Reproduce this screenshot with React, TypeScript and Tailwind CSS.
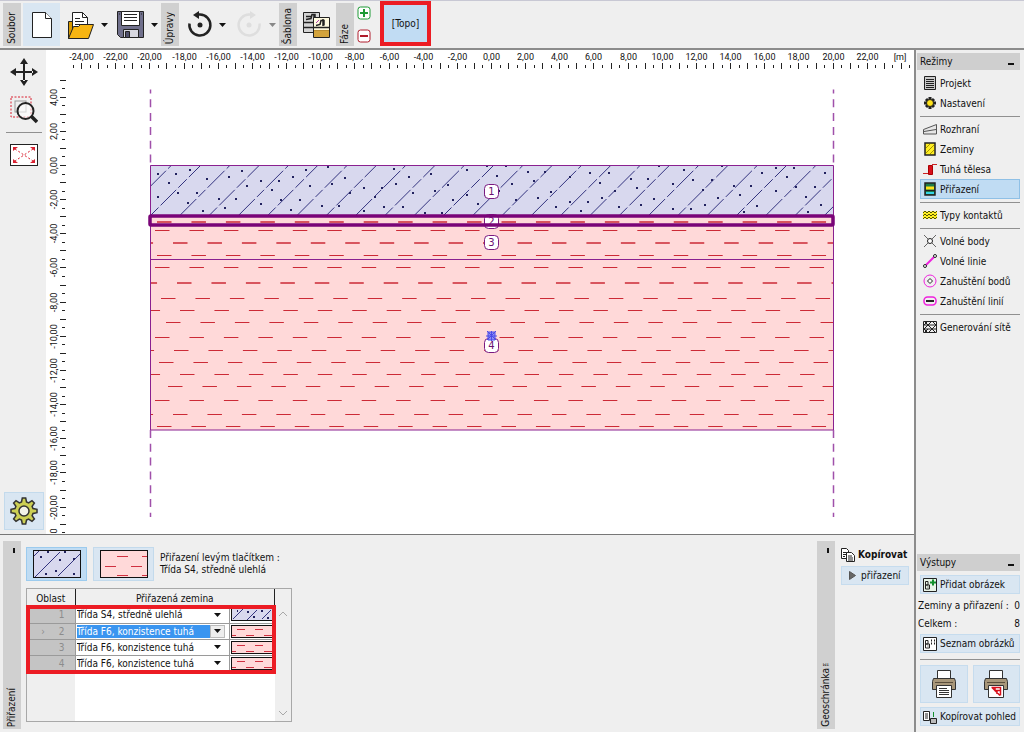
import type { ReactNode } from "react";

const SCALE = 17.08;
const ORIGIN_X = 445.5;
const ORIGIN_Y = 115.5;

const px = (m: number) => Math.round(ORIGIN_X + m * SCALE - 0.5) + 0.5;
const py = (m: number) => Math.round(ORIGIN_Y - m * SCALE - 0.5) + 0.5;

const range = (from: number, to: number, step: number) => {
  const out: number[] = [];
  for (let v = from; v <= to + 0.001; v += step) out.push(v);
  return out;
};

const formatMeters = (v: number) => v.toFixed(2).replace(".", ",");

// [y, x of the first full dash]
const clayRows = [
  [172, 111],
  [180.5, 109],
  [193, 127],
  [205.5, 111],
  [217.5, 109],
  [233, 131],
  [248.5, 115],
  [260.5, 134],
  [272.5, 120],
  [287.5, 109],
  [300.5, 128],
  [312.5, 113],
  [324.5, 134],
  [336.5, 122],
  [350.5, 109],
  [364.5, 127],
  [376.5, 111],
];

const sandDots = [
  [7, 8], [25, 8], [39, 4], [56, 13], [7, 31], [27, 27], [46, 27], [37, 37],
  [52, 45], [18, 17], [78, 11], [91, 5], [68, 33], [85, 33], [74, 42], [96, 20],
];

const regions = [
  { id: 1, y: 141 },
  { id: 2, y: 171 },
  { id: 3, y: 192 },
  { id: 4, y: 295 },
];

function Rulers() {
  return (
    <g>
      <g stroke="#222">
        {range(-24.5, 24.5, 0.5).map((m) => (
          <line key={m} x1={px(m)} x2={px(m)} y1={Number.isInteger(m) ? 13 : 15} y2={Number.isInteger(m) ? 19 : 18} />
        ))}
        {range(-21.5, 5, 0.5).map((m) => (
          <line key={m} y1={py(m)} y2={py(m)} x1={Number.isInteger(m) ? 14 : 16} x2={Number.isInteger(m) ? 20 : 19} />
        ))}
      </g>
      <g fontFamily="Roboto, sans-serif" fontSize="9" fill="#111" textAnchor="middle">
        {range(-24, 22, 2).map((m) => (
          <text key={m} x={px(m)} y="10">
            {formatMeters(m)}
          </text>
        ))}
        <text x="854" y="10">
          [m]
        </text>
        {range(-20, 4, 2).map((m) => (
          <text key={m} transform={`translate(11 ${py(m)}) rotate(-90)`}>
            {formatMeters(m)}
          </text>
        ))}
        {/* only the last digit of the next label fits above the edge */}
        <text transform="translate(11 481) rotate(-90)">0</text>
      </g>
    </g>
  );
}

function Section() {
  return (
    <g>
      <defs>
        <clipPath id="sand">
          <rect x="104" y="115" width="683" height="50" />
        </clipPath>
        <clipPath id="clay">
          <rect x="104" y="165" width="683" height="215" />
        </clipPath>
      </defs>
      <rect x="104" y="115" width="683" height="50" fill="#d8d8ee" />
      <rect x="104" y="165" width="683" height="215" fill="#ffd9d9" />
      <g clipPath="url(#sand)">
        {range(-2, 24, 1).map((i) => (
          <line
            key={i}
            x1={104 + i * 29.3}
            y1="166"
            x2={155 + i * 29.3}
            y2="115"
            stroke="#33337f"
            strokeDasharray={i % 2 ? "24 3 10 3" : "12 3 22 3"}
          />
        ))}
        {range(0, 6, 1).map((i) =>
          sandDots.map(([x, y]) => (
            <rect key={`${i}-${x}-${y}`} x={104 + i * 103 + x} y={115 + ((y + i * 7) % 48)} width="2" height="2" fill="#22225f" />
          ))
        )}
      </g>
      <g clipPath="url(#clay)" stroke="#cc2a36">
        {clayRows.map(([y, x]) => (
          <line
            key={y}
            x1={x - 34.45}
            x2="800"
            y1={y}
            y2={y}
            strokeDasharray="14.5 19.95"
            strokeWidth={Number.isInteger(y) ? 1.5 : 1}
          />
        ))}
      </g>
      <g fill="none" stroke="#8a2090">
        <path d="M104.5 115.5H787.5V380H104.5Z" />
        <path d="M104 209.5H787" />
      </g>
      <g stroke="#a050aa" strokeWidth="1.5" strokeDasharray="8 5.8">
        <path d="M104.5 39.5V115" strokeDashoffset="4" />
        <path d="M787.5 39.5V115" strokeDashoffset="4" />
        <path d="M104.5 380V467" />
        <path d="M787.5 380V467" />
      </g>
      {regions.map(({ id, y }) => (
        <g key={id}>
          <rect x="438.5" y={y - 6.5} width="14" height="14" rx="4" fill="#fff" stroke="#7a1a80" />
          <text x="445.5" y={y + 4} textAnchor="middle" fontSize="10" fontFamily="'DejaVu Sans', sans-serif" fill="#6a1070">
            {id}
          </text>
        </g>
      ))}
      <path d="M442 282h7v8h-7zM441 281l9 9M450 281l-9 9M445.5 281v10M440 286h11" fill="#8d8df5" stroke="#4a4ae6" />
      <rect x="104" y="166" width="683" height="9" fill="none" stroke="#7a0478" strokeWidth="3.5" rx="1" />
    </g>
  );
}

function VerticalTab({ label, className = "" }: { label: string; className?: string }) {
  return (
    <div className={`flex h-full w-[18px] shrink-0 items-end bg-[#d0d0d0] pb-[2px] ${className}`}>
      <span className="rotate-180 leading-[18px] whitespace-nowrap [writing-mode:vertical-rl]">{label}</span>
    </div>
  );
}

function Caret({ color = "#111" }: { color?: string }) {
  return (
    <svg width="7" height="4" viewBox="0 0 7 4" className="shrink-0">
      <path d="M0 0h7L3.5 4z" fill={color} />
    </svg>
  );
}

function Toolbar() {
  return (
    <header className="flex h-12 items-start border-t border-[#c8c8d4] pt-[2px] pl-[3px]">
      <div className="flex h-[43px] items-center">
        <VerticalTab label="Soubor" />
        <button aria-label="Nový" className="ml-[2px] flex h-full w-[37px] items-center justify-center bg-[#d9e6f2]">
          <svg width="22" height="28" viewBox="0 0 22 28" fill="#fff" stroke="#222">
            <path d="M1.5 1.5h13l6 6v19h-19z" />
            <path d="M14.5 1.5v6h6" />
          </svg>
        </button>
        <button aria-label="Otevřít" className="ml-[7px]">
          <svg width="28" height="30" viewBox="0 0 28 30" stroke="#222">
            <path d="M1.5 28.5v-17h6l2 3h10v14z" fill="#d99a00" />
            <path d="M5.5 21.5v-19h10l5 5v14z" fill="#fff" />
            <path d="M15.5 2.5v5h5M8 8.5h5M8 11.5h9M8 14.5h9" fill="none" />
            <path d="M1.5 28.5l5-12h5l2-2h13l-5 14z" fill="#f7b512" />
          </svg>
        </button>
        <button aria-label="Otevřít nedávné" className="ml-[6px]">
          <Caret />
        </button>
        <button aria-label="Uložit" className="ml-[8px]">
          <svg width="29" height="29" viewBox="0 0 29 29" stroke="#222">
            <path d="M1.5 1.5h26v26h-23l-3-3z" fill="#70708c" />
            <path d="M5.5 1.5h18v14h-18z" fill="#fff" />
            <path d="M8 4.5h13M8 7.5h13M8 10.5h13" />
            <path d="M7.5 19.5h15v8h-15z" fill="#d8d8e0" />
            <path d="M9.5 21.5h4v6h-4z" fill="#50506c" />
            <path d="M3 4h1M25 4h1" />
          </svg>
        </button>
        <button aria-label="Uložit jako" className="ml-[6px]">
          <Caret />
        </button>
        <VerticalTab label="Úpravy" className="ml-[3px]" />
        <button aria-label="Zpět" className="ml-[8px]">
          <svg width="26" height="28" viewBox="0 0 26 28">
            <path d="M2.5 12.5a10.5 10.5 0 1 0 10.5-9H11" fill="none" stroke="#222" strokeWidth="2.5" />
            <path d="M6 4l6-4v8z" fill="#222" />
            <circle cx="13" cy="14" r="2.5" fill="#222" />
          </svg>
        </button>
        <button aria-label="Historie zpět" className="ml-[6px]">
          <Caret />
        </button>
        <button aria-label="Znovu" disabled className="ml-[11px]">
          <svg width="26" height="28" viewBox="0 0 26 28">
            <path d="M22.5 12.5a10.5 10.5 0 1 1-10.5-9h2" fill="none" stroke="#dedede" strokeWidth="2.5" />
            <path d="M19 4l-6-4v8z" fill="#dedede" />
            <circle cx="12" cy="14" r="2.5" fill="#dedede" />
          </svg>
        </button>
        <button aria-label="Historie znovu" disabled className="ml-[6px]">
          <Caret color="#888" />
        </button>
        <VerticalTab label="Šablona" className="ml-[3px]" />
        <button aria-label="Šablona" className="ml-[6px]">
          <svg width="28" height="28" viewBox="0 0 28 28" stroke="#222">
            <path d="M.5 1.5h16v20H.5z" fill="#d4d4d4" />
            <path d="M3 5.5h5M3 8.5l5-1 1-4h3v5M11 3v6M1 11.5h15M1 16.5h15" fill="none" strokeWidth="1.5" />
            <path d="M10.5 6.5h16v20h-16z" fill="#fffbe0" />
            <path d="M11 20h15v6H11z" fill="#d3a33c" stroke="none" />
            <path d="M13 14.5l4-1 1-4h3v5M20 8v7M11 16.5h15" fill="none" strokeWidth="1.5" />
            <path d="M11 19.5h15" stroke="#b98c30" />
            <path d="M13 12l3-3" stroke="#b03ab0" />
          </svg>
        </button>
        <VerticalTab label="Fáze" className="ml-[5px]" />
        <div className="ml-[3px] flex flex-col gap-[9px]">
          <button aria-label="Přidat fázi">
            <svg width="14" height="14" viewBox="0 0 14 14" className="block" fill="none" stroke="#1c9a34">
              <rect x="1" y="1" width="12" height="12" rx="2.5" fill="#fff" />
              <path d="M3 7h8M7 3v8" strokeWidth="2" />
            </svg>
          </button>
          <button aria-label="Odebrat fázi">
            <svg width="14" height="14" viewBox="0 0 14 14" className="block" fill="none" stroke="#b01c2c">
              <rect x="1" y="1" width="12" height="12" rx="2.5" fill="#fff" />
              <path d="M3 7h8" strokeWidth="2" />
            </svg>
          </button>
        </div>
      </div>
      <button className="-mt-[2px] ml-[9px] h-[45px] w-[51px] border-4 border-[#ec1c24] bg-[#c1dcf3]">[Topo]</button>
    </header>
  );
}

function Gear({ size, fill, stroke }: { size: number; fill: string; stroke: string }) {
  return (
    <svg width={size} height={size} viewBox="0 0 28 28" fill={fill} stroke={stroke} strokeWidth="1.5">
      {/* eight teeth around the hub */}
      <path d="M11.500 5l.8-4h3.400l.8 4 2.100.9L22 3.600 24.400 6l-2.300 3.400.9 2.100 4 .8v3.400l-4 .8-.9 2.100 2.300 3.400L22 24.400l-3.400-2.300-2.100.9-.8 4h-3.400l-.8-4-2.100-.9L6 24.400 3.600 22l2.300-3.400L5 16.500l-4-.8v-3.400l4-.8.9-2.100L3.600 6 6 3.600l3.400 2.300z" />
      <circle cx="14" cy="14" r="5" fill="#f2f2e8" />
    </svg>
  );
}

function ViewTools() {
  return (
    <div className="flex w-[46px] shrink-0 flex-col items-center pt-[8px] pb-1 pl-px">
      <button aria-label="Posun">
        <svg width="28" height="28" viewBox="0 0 28 28" fill="#222" className="block">
          <path d="M13 5h2v18h-2zM5 13h18v2H5zM14 0l4 6h-8zM14 28l4-6h-8zM0 14l6-4v8zM28 14l-6-4v8z" />
        </svg>
      </button>
      <button aria-label="Lupa" className="mt-[10px]">
        <svg width="28" height="28" viewBox="0 0 28 28" fill="none" className="block">
          <rect x="1" y="1" width="20" height="20" stroke="#d92030" strokeDasharray="2 1.5" />
          <rect x="5" y="5" width="11" height="11" stroke="#999" />
          <circle cx="15.5" cy="15" r="8" stroke="#222" strokeWidth="2" fill="#fff" fillOpacity=".6" />
          <path d="M21 20l6 6" stroke="#222" strokeWidth="3.5" />
        </svg>
      </button>
      <div className="mt-[8px] h-px w-9 bg-[#909090]" />
      <button aria-label="Zobrazit vše" className="mt-[11px]">
        <svg width="28" height="22" viewBox="0 0 28 22" fill="#fff" stroke="#222" className="block">
          <rect x=".5" y=".5" width="27" height="21" />
          <path d="M5 5l18 12M23 5L5 17" stroke="#d92030" strokeDasharray="2 2" />
          <path d="M3 3h5l-5 4zM25 3h-5l5 4zM3 19h5l-5-4zM25 19h-5l5-4z" fill="#d92030" stroke="none" />
        </svg>
      </button>
      <button aria-label="Nastavení zobrazení" className="mt-auto flex h-[38px] w-10 items-center justify-center border border-[#c3daec] bg-[#d9e6f2]">
        <Gear size={28} fill="#cccf54" stroke="#333" />
      </button>
    </div>
  );
}

function ModeIcon({ children }: { children: ReactNode }) {
  return (
    <svg width="14" height="14" viewBox="0 0 14 14" fill="none" stroke="#222" className="shrink-0">
      {children}
    </svg>
  );
}

const modeGroups: { label: string; active?: boolean; icon: ReactNode }[][] = [
  [
    { label: "Projekt", icon: <path d="M1.5.5h11v13h-11zM3 3.5h8M3 5.5h8M3 7.5h8M3 9.5h8M3 11.5h8" fill="#ccc" /> },
    {
      label: "Nastavení",
      icon: (
        <>
          <path d="M7 1v12M1 7h12M3 3l8 8M11 3L3 11" strokeWidth="3" />
          <circle cx="7" cy="7" r="3.5" fill="#ffe21a" />
        </>
      ),
    },
  ],
  [
    { label: "Rozhraní", icon: <path d="M.5 7.5L13.5 2.5v9.5H.5zM1 9.5L13 7.5" fill="#e6e6e6" stroke="#555" /> },
    {
      label: "Zeminy",
      icon: (
        <>
          <rect x="2" y="1" width="10" height="12" fill="#ffee22" strokeWidth="1.5" />
          <path d="M3 6l4-4M3 11l8-8M7 12l4-4" stroke="#a89500" />
        </>
      ),
    },
    {
      label: "Tuhá tělesa",
      icon: (
        <>
          <path d="M0 11.5h6M9 2.5h5" stroke="#c22" />
          <path d="M5.5 3.5h4v9h-4z" fill="#d8101c" stroke="#a00" />
        </>
      ),
    },
    {
      label: "Přiřazení",
      active: true,
      icon: (
        <>
          <rect x="2" y="1" width="10" height="12" fill="#1c7c4c" strokeWidth="1.5" />
          <path d="M3 6h8" stroke="#ffe21a" strokeWidth="3" />
          <path d="M3 11h8" stroke="#35d6e8" strokeWidth="2" />
          <path d="M2 8.5h10" />
        </>
      ),
    },
  ],
  [
    {
      label: "Typy kontaktů",
      icon: (
        <>
          <path d="M0 7h14" stroke="#ffee22" strokeWidth="7" />
          <path d="M0 5l2-2 2 2 2-2 2 2 2-2 2 2 2-2M0 8l2-2 2 2 2-2 2 2 2-2 2 2 2-2M0 11l2-2 2 2 2-2 2 2 2-2 2 2 2-2" stroke="#555500" />
        </>
      ),
    },
  ],
  [
    {
      label: "Volné body",
      icon: (
        <>
          <path d="M1 1l12 12M13 1L1 13" stroke="#666" />
          <circle cx="7" cy="7" r="2.5" fill="#fff" />
        </>
      ),
    },
    {
      label: "Volné linie",
      icon: (
        <>
          <path d="M2 12L12 2" stroke="#ee22dd" strokeWidth="2" />
          <circle cx="2" cy="12" r="1.5" fill="#fff" />
          <circle cx="12" cy="2" r="1.5" fill="#fff" />
        </>
      ),
    },
    {
      label: "Zahuštění bodů",
      icon: (
        <>
          <circle cx="7" cy="7" r="6" stroke="#ee22dd" />
          <path d="M7 4.5L9.5 7 7 9.5 4.5 7z" fill="#fff" />
        </>
      ),
    },
    {
      label: "Zahuštění linií",
      icon: (
        <>
          <rect x="1" y="3" width="12" height="8" rx="3.5" stroke="#ee22dd" strokeWidth="1.5" />
          <path d="M3 7h8" strokeWidth="2" />
        </>
      ),
    },
  ],
  [
    {
      label: "Generování sítě",
      icon: <path d="M.5 1.5h13v11H.5zM0 5h14M0 9h14M1 1l4 4 4-4 4 4M1 9l4-4 4 4 4-4M1 9l4 4 4-4 4 4M5 1l-4 4M5 9l-4 4" />,
    },
  ],
];

function PanelTitle({ title }: { title: string }) {
  return (
    <div className="flex h-[17px] items-center justify-between bg-[#cfcfcf] px-[3px]">
      <h2>{title}</h2>
      <button aria-label={`Sbalit ${title}`} className="mt-1 mr-[3px] h-[2px] w-[6px] bg-[#111]" />
    </div>
  );
}

function SideButton({ label, children }: { label: string; children: ReactNode }) {
  return (
    <button className="flex h-[19px] w-full items-center gap-[3px] border border-[#c6dcee] bg-[#d9e6f2] pl-[2px] whitespace-nowrap">
      <svg width="14" height="14" viewBox="0 0 14 14" fill="none" stroke="#222" className="shrink-0">
        {children}
      </svg>
      {label}
    </button>
  );
}

function Printer({ red = false }: { red?: boolean }) {
  return (
    <svg width="24" height="28" viewBox="0 0 24 28" stroke="#333">
      <path d="M5.5.5h13v9h-13z" fill="#fff" />
      <path d="M1.5 8.5h21l1 3v8H.5v-8z" fill="#a8977a" />
      <path d="M3 12.5h18" stroke="#5b4e3c" />
      <path d="M4.5 15.5h15v12h-15z" fill="#fff" />
      {red ? (
        <path d="M7.5 17.5h9v8M8 17.5l8 8M11 17.5v3h5M13 20v4" stroke="#d8101c" strokeWidth="1.5" fill="none" />
      ) : (
        <path d="M7 18.5h8M7 20.5h10M7 22.5h10M7 24.5h10" />
      )}
    </svg>
  );
}

function Sidebar() {
  return (
    <aside className="flex w-[110px] shrink-0 flex-col justify-between border-l-2 border-[#8c8c8c] pt-[3px] pr-1 pb-[6px] pl-px">
      <section>
        <PanelTitle title="Režimy" />
        <nav className="flex flex-col pt-[3px] pl-[3px]">
          {modeGroups.map((group, index) => (
            <div key={index} className="border-[#909090] not-first:mt-[3px] not-first:border-t not-first:pt-[2px]">
              {group.map(({ label, active, icon }) => (
                <button
                  key={label}
                  className={`flex h-5 w-full items-center gap-[3px] border pl-[2px] whitespace-nowrap ${
                    active ? "border-[#8fc0e6] bg-[#c0dcf3]" : "border-transparent"
                  }`}
                >
                  <ModeIcon>{icon}</ModeIcon>
                  {label}
                </button>
              ))}
            </div>
          ))}
        </nav>
      </section>
      <section>
        <PanelTitle title="Výstupy" />
        <div className="flex flex-col pt-1 pl-[3px]">
          <SideButton label="Přidat obrázek">
            <path d="M.5.5h13v13H.5z" fill="#e8f4e8" />
            <path d="M2.5 3.5h2.500v3.500h-2.500zM2.500 7h4v4h-4zM4.500 9h1" />
            <path d="M10 1.5v6M7 4.5h6" stroke="#12902c" strokeWidth="2" />
          </SideButton>
          <dl className="-ml-[2px] leading-[18px] whitespace-nowrap">
            <div className="mt-[3px] flex justify-between">
              <dt>Zeminy a přiřazení :</dt>
              <dd>0</dd>
            </div>
            <div className="flex justify-between">
              <dt>Celkem :</dt>
              <dd>8</dd>
            </div>
          </dl>
          <div className="mt-px">
            <SideButton label="Seznam obrázků">
              <path d="M.5.5h13v13H.5z" fill="#fff" />
              <path d="M2.5 3.5h2.500v3.500h-2.500zM2.500 7h4v4h-4zM4.500 9h1" />
              <path d="M8 3.500h1M11 3.500h1M8 6.500h1M11 6.500h1" strokeWidth="2" />
            </SideButton>
          </div>
          <div className="mt-[6px] mb-[5px] h-px bg-[#909090]" />
          <div className="grid grid-cols-2 gap-[5px]">
            <button aria-label="Tisk textu" className="flex h-[38px] items-center justify-center border border-[#c6dcee] bg-[#d9e6f2]">
              <Printer />
            </button>
            <button aria-label="Tisk obrázku" className="flex h-[38px] items-center justify-center border border-[#c6dcee] bg-[#d9e6f2]">
              <Printer red />
            </button>
          </div>
          <div className="mt-1">
            <SideButton label="Kopírovat pohled">
              <path d="M.5 1.5h6v9h-6zM2 4h3M2 6h3M2 8h3" fill="#fff" />
              <path d="M7.5 8.5h6v5h-6z" fill="#bbb" />
              <path d="M10.5 2v5" stroke="#12902c" />
            </SideButton>
          </div>
        </div>
      </section>
    </aside>
  );
}

type SoilKind = "sand" | "clay";

function LargeSwatch({ kind }: { kind: SoilKind }) {
  return (
    <svg width="48" height="28" viewBox="0 0 48 28" className="block">
      {kind === "sand" ? (
        <>
          <rect width="48" height="28" fill="#d8d8ee" />
          <path d="M2 27L27 2M25 26L47 4M1 6l5-5" stroke="#33337f" />
          <path d="M7 7h2M14 2h2M26 10h2M31 2h2M40 9h2M22 21h2M12 24h2M40 24h2" stroke="#22225f" strokeWidth="2" />
        </>
      ) : (
        <>
          <rect width="48" height="28" fill="#ffd9d9" />
          <path d="M17 6.5h11M42 6.500h5M5 16.500h11M31 16.500h11M17 25.500h11M42 25.500h5" stroke="#d03040" />
        </>
      )}
      <rect x=".5" y=".5" width="47" height="27" fill="none" stroke="#111" />
    </svg>
  );
}

function SmallSwatch({ kind }: { kind: SoilKind }) {
  return (
    <svg width="42" height="13" viewBox="0 0 42 13" className="block">
      {kind === "sand" ? (
        <>
          <rect width="42" height="13" fill="#d8d8ee" />
          <path d="M2 11L12 1M16 12L26 2M31 11L40 2" stroke="#33337f" />
          <path d="M6 3h1M16 4h2M22 9h2M30 3h2M36 10h2" stroke="#22225f" strokeWidth="2" />
        </>
      ) : (
        <>
          <rect width="42" height="13" fill="#ffd9d9" />
          <path d="M6 4.500h8M24 4.500h8M1 10.500h4M15 10.500h8M33 10.500h8" stroke="#d03040" />
        </>
      )}
      <rect x=".5" y=".5" width="41" height="12" fill="none" stroke="#111" />
    </svg>
  );
}

const soils = ["Třída S4, středně ulehlá", "Třída F6, konzistence tuhá"];

const assignments: { id: number; soil: string; kind: SoilKind; current?: boolean }[] = [
  { id: 1, soil: soils[0], kind: "sand" },
  { id: 2, soil: soils[1], kind: "clay", current: true },
  { id: 3, soil: soils[1], kind: "clay" },
  { id: 4, soil: soils[1], kind: "clay" },
];

function AssignmentTable() {
  return (
    <div className="relative mt-[7px] flex h-[134px] w-[266px] border border-[#a8a8a8]">
      <div className="w-[248px] bg-[linear-gradient(to_right,#efefef_48px,#fff_48px)]">
        <table className="w-full table-fixed border-collapse">
          <colgroup>
            <col className="w-12" />
            <col />
            <col className="w-[45px]" />
          </colgroup>
          <thead>
            <tr className="h-[18px] bg-[#efefef]">
              <th className="p-0 font-normal">Oblast</th>
              <th colSpan={2} className="border-x border-[#222] p-0 font-normal">
                Přiřazená zemina
              </th>
            </tr>
          </thead>
          <tbody>
            {assignments.map(({ id, soil, kind, current }) => (
              <tr key={id} className="h-4">
                <td className="border-b border-[#9a9a9a] bg-[#c4c4c4] p-0 pr-[10px] text-[#8c8c8c]">
                  <div className="flex h-[15px] items-center justify-end gap-[14px]">
                    {current && <span aria-hidden="true">›</span>}
                    <span>{id}</span>
                  </div>
                </td>
                <td className="border-x border-b border-[#9a9a9a] bg-white p-0">
                  <div className="flex h-[15px] items-center pl-px">
                    <select
                      aria-label={`Zemina oblasti ${id}`}
                      defaultValue={soil}
                      className={`h-[13px] w-[133px] appearance-none leading-[13px] ${
                        current ? "bg-[#3a95f0] text-white" : ""
                      }`}
                    >
                      {soils.map((name) => (
                        <option key={name}>{name}</option>
                      ))}
                    </select>
                    <span className={`flex h-[13px] w-[15px] items-center justify-center ${current ? "border border-[#bbb] bg-[#eee]" : ""}`}>
                      <Caret />
                    </span>
                  </div>
                </td>
                <td className="border-b border-[#9a9a9a] bg-white p-0">
                  <div className="flex justify-center">
                    <SmallSwatch kind={kind} />
                  </div>
                </td>
              </tr>
            ))}
          </tbody>
        </table>
      </div>
      <div className="flex flex-1 flex-col items-center justify-between pt-[22px] pb-[5px]">
        {["M0 5l4-4 4 4", "M0 1l4 4 4-4"].map((d) => (
          <svg key={d} width="8" height="6" viewBox="0 0 8 6" fill="none" stroke="#a8a8a8">
            <path d={d} />
          </svg>
        ))}
      </div>
      <div className="pointer-events-none absolute top-[16px] -left-px h-[69px] w-[250px] border-4 border-[#ec1c24]" />
    </div>
  );
}

function BottomPanel() {
  return (
    <div className="flex flex-1 border-t border-[#777] pt-[6px] pb-[3px] pl-[3px]">
      <div className="flex w-[18px] shrink-0 flex-col items-center justify-between bg-[#d0d0d0] pt-[7px] pb-[2px]">
        <button aria-label="Sbalit přiřazení" className="ml-1 h-[5px] w-[2px] bg-[#111]" />
        <span className="rotate-180 leading-[18px] [writing-mode:vertical-rl]">Přiřazení</span>
      </div>
      <div className="flex-1 pt-[6px] pl-[5px]">
        <div className="flex items-center gap-[6px]">
          <button aria-label={soils[0]} className="flex h-[34px] w-[61px] items-center justify-center border border-[#9ccbee] bg-[#c0dcf3]">
            <LargeSwatch kind="sand" />
          </button>
          <button aria-label={soils[1]} className="flex h-[34px] w-[61px] items-center justify-center border border-[#c3daec] bg-[#d9e6f2]">
            <LargeSwatch kind="clay" />
          </button>
          <p className="leading-3">
            Přiřazení levým tlačítkem :
            <br />
            {soils[0]}
          </p>
        </div>
        <AssignmentTable />
      </div>
      <div className="flex w-[18px] shrink-0 flex-col items-center justify-between bg-[#d0d0d0] pt-[7px] pb-[2px]">
        <button aria-label="Sbalit geoschránku" className="ml-1 h-[5px] w-[2px] bg-[#111]" />
        <span className="rotate-180 leading-[18px] [writing-mode:vertical-rl]">Geoschránka™</span>
      </div>
      <div className="w-[79px] shrink-0 pt-[6px] pr-[5px] pl-[6px]">
        <h3 className="flex h-[15px] items-center gap-[3px] font-bold whitespace-nowrap">
          <svg width="14" height="14" viewBox="0 0 14 14" fill="#fff" stroke="#222" className="shrink-0">
            <path d="M.5.5h5l2 2v8h-7zM2 4.5h4M2 6.5h4M2 8.5h2" />
            <path d="M5.5 4.5h5l3 3v6h-8zM7 8h4M7 10h5M7 12h5" />
          </svg>
          Kopírovat
        </h3>
        <button className="mt-1 flex h-[19px] w-full items-center gap-[5px] border border-[#c6dcee] bg-[#d9e6f2] pl-[7px]">
          <svg width="7" height="9" viewBox="0 0 7 9">
            <path d="M.5.5l6 4-6 4z" fill="#666" stroke="#555" />
          </svg>
          přiřazení
        </button>
      </div>
    </div>
  );
}

export default function App() {
  return (
    <div className="flex min-h-screen flex-col bg-[#efefef] font-['DejaVu_Sans_Condensed','DejaVu_Sans',sans-serif] text-[10px] leading-[13px] text-[#111]">
      <Toolbar />
      <div className="flex flex-1 border-t-2 border-[#8c8c8c]">
        <div className="flex min-w-0 flex-1 flex-col">
          <div className="flex">
            <ViewTools />
            <svg viewBox="0 0 868 484" className="block min-w-0 flex-1 bg-white" role="img" aria-label="Geologický řez">
              <Rulers />
              <Section />
            </svg>
          </div>
          <BottomPanel />
        </div>
        <Sidebar />
      </div>
    </div>
  );
}
